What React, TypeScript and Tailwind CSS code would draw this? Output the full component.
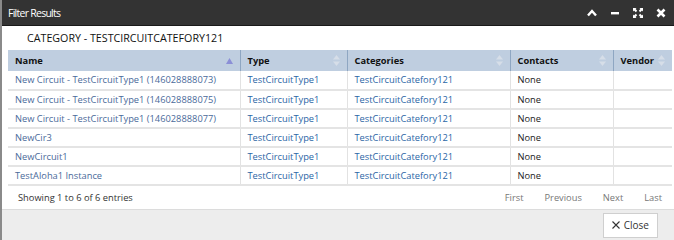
import React from "react";

const rows = [
  "New Circuit - TestCircuitType1 (146028888073)",
  "New Circuit - TestCircuitType1 (146028888075)",
  "New Circuit - TestCircuitType1 (146028888077)",
  "NewCir3",
  "NewCircuit1",
  "TestAloha1 Instance",
];

function SortBoth() {
  return (
    <svg width="7" height="11" viewBox="0 0 7 11" className="shrink-0">
      <path d="M3.5 0 L7 4.5 H0 Z" fill="#d6dee8" />
      <path d="M3.5 11 L7 6.5 H0 Z" fill="#d6dee8" />
    </svg>
  );
}

function SortAsc() {
  return (
    <svg width="7" height="6" viewBox="0 0 7 6" className="shrink-0">
      <path d="M3.5 0 L7 6 H0 Z" fill="#8b8fd6" />
    </svg>
  );
}

function Th({ label, asc, className }: { label: string; asc?: boolean; className: string }) {
  return (
    <th
      className={`h-[21px] border-r border-[#8ea6c2] px-[7px] text-left align-middle font-bold text-[#111] last:border-r-0 ${className}`}
    >
      <div className="flex items-center justify-between">
        <span>{label}</span>
        {asc ? <SortAsc /> : <SortBoth />}
      </div>
    </th>
  );
}

export default function App() {
  return (
    <div
      className="flex h-[240px] w-[674px] flex-col overflow-hidden border-l-2 border-[#8a8a8a] bg-white text-[9.3px] leading-[14px]"
      style={{ fontFamily: '"Open Sans", "Noto Sans", sans-serif' }}
    >
      <div className="flex h-[26px] shrink-0 items-center justify-between border-b border-[#1a1a1a] bg-[#333333] pl-[6px] pr-[8px]">
        <span className="text-[10.5px] tracking-[-0.07em] text-white">Filter Results</span>
        <div className="flex items-center gap-[13px]">
          <svg width="10" height="10" viewBox="0 0 10 10">
            <path d="M1 7.5 L5 3 L9 7.5" stroke="white" strokeWidth="2.4" fill="none" />
          </svg>
          <svg width="10" height="10" viewBox="0 0 10 10">
            <rect x="1" y="4" width="8" height="2.4" fill="white" />
          </svg>
          <svg width="10" height="10" viewBox="0 0 10 10">
            <path d="M0 0 H3.5 L2.6 1 L4.2 2.8 L2.8 4.2 L1 2.6 L0 3.5 Z" fill="white" />
            <path d="M10 0 H6.5 L7.4 1 L5.8 2.8 L7.2 4.2 L9 2.6 L10 3.5 Z" fill="white" />
            <path d="M0 10 H3.5 L2.6 9 L4.2 7.2 L2.8 5.8 L1 7.4 L0 6.5 Z" fill="white" />
            <path d="M10 10 H6.5 L7.4 9 L5.8 7.2 L7.2 5.8 L9 7.4 L10 6.5 Z" fill="white" />
          </svg>
          <svg width="10" height="10" viewBox="0 0 10 10">
            <path d="M1.5 1.5 L8.5 8.5 M8.5 1.5 L1.5 8.5" stroke="white" strokeWidth="2.6" />
          </svg>
        </div>
      </div>

      <div className="flex flex-1 flex-col px-[6px]">
        <div className="pl-[19px] pt-[4px] pb-[4px] text-[10.7px] leading-[16px] text-[#111]">
          CATEGORY - TESTCIRCUITCATEFORY121
        </div>
        <table className="w-[664px] table-fixed border-collapse whitespace-nowrap">
          <thead>
            <tr className="bg-[#bfcee0]">
              <Th label="Name" asc className="w-[232px]" />
              <Th label="Type" className="w-[107px]" />
              <Th label="Categories" className="w-[163px]" />
              <Th label="Contacts" className="w-[103px]" />
              <Th label="Vendor" className="" />
            </tr>
          </thead>
          <tbody>
            {rows.map((name) => (
              <tr key={name} className="h-[19px] border-b-2 border-[#e4e4e4] text-left">
                <td className="overflow-hidden border-r border-[#e2e2e2] px-[7px] text-[#4a6a9a]">{name}</td>
                <td className="overflow-hidden border-r border-[#e2e2e2] px-[7px] text-[#2b66a6]">TestCircuitType1</td>
                <td className="overflow-hidden border-r border-[#e2e2e2] px-[7px] text-[#2b66a6]">TestCircuitCatefory121</td>
                <td className="overflow-hidden border-r border-[#e2e2e2] px-[7px] text-[#222]">None</td>
                <td className="px-[7px]" />
              </tr>
            ))}
          </tbody>
        </table>
        <div className="flex items-center justify-between pl-[10px] pr-[6px] pt-[5px] text-[#333]">
          <span>Showing 1 to 6 of 6 entries</span>
          <div className="flex gap-[21px] text-[#777]">
            <span>First</span>
            <span>Previous</span>
            <span>Next</span>
            <span>Last</span>
          </div>
        </div>
      </div>

      <div className="flex h-[31px] shrink-0 items-center justify-end border-t border-[#dcdcdc] bg-[#ededed] pr-[16px]">
        <button className="flex h-[25px] items-center gap-[4px] border border-[#cfcfcf] bg-white px-[8px] text-[10px] text-[#333]">
          <svg width="8" height="8" viewBox="0 0 8 8">
            <path d="M0.5 0.5 L7.5 7.5 M7.5 0.5 L0.5 7.5" stroke="#333" strokeWidth="1.1" />
          </svg>
          <span>Close</span>
        </button>
      </div>
    </div>
  );
}
